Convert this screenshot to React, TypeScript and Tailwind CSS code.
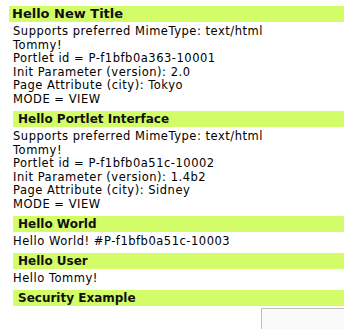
const portlets = [
  {
    title: "Hello New Title",
    first: true,
    lines: [
      "Supports preferred MimeType: text/html",
      "Tommy!",
      "Portlet id = P-f1bfb0a363-10001",
      "Init Parameter (version): 2.0",
      "Page Attribute (city): Tokyo",
      "MODE = VIEW",
    ],
  },
  {
    title: "Hello Portlet Interface",
    lines: [
      "Supports preferred MimeType: text/html",
      "Tommy!",
      "Portlet id = P-f1bfb0a51c-10002",
      "Init Parameter (version): 1.4b2",
      "Page Attribute (city): Sidney",
      "MODE = VIEW",
    ],
  },
  { title: "Hello World", lines: ["Hello World! #P-f1bfb0a51c-10003"] },
  { title: "Hello User", lines: ["Hello Tommy!"] },
  { title: "Security Example", lines: [] },
];

export default function App() {
  return (
    <div className="w-[344px] h-[329px] overflow-hidden bg-white text-black font-['DejaVu_Sans',Verdana,sans-serif] text-[11.5px] tracking-[0.52px] leading-[13.6px]">
      <div className="pt-[6px]">
        {portlets.map((p) => (
          <section key={p.title}>
            <div
              className={
                p.first
                  ? "ml-[9px] pl-[3px] h-[16px] bg-[#d2fd68] font-bold text-[13px] tracking-normal leading-[16px] text-[#111]"
                  : "ml-[13px] pl-[5px] h-[16px] bg-[#d2fd68] font-bold text-[12px] tracking-normal leading-[16px] text-[#111]"
              }
            >
              {p.title}
            </div>
            {p.lines.length > 0 && (
              <div className="pl-[13px] pt-[3px] pb-[4.4px]">
                {p.lines.map((l, i) => (
                  <div key={i}>{l}</div>
                ))}
              </div>
            )}
          </section>
        ))}
        <div className="mt-[2px] flex justify-end">
          <div className="w-[83px] h-[30px] border-l border-t border-[#bdbdbd] bg-[#fafafa]" />
        </div>
      </div>
    </div>
  );
}
